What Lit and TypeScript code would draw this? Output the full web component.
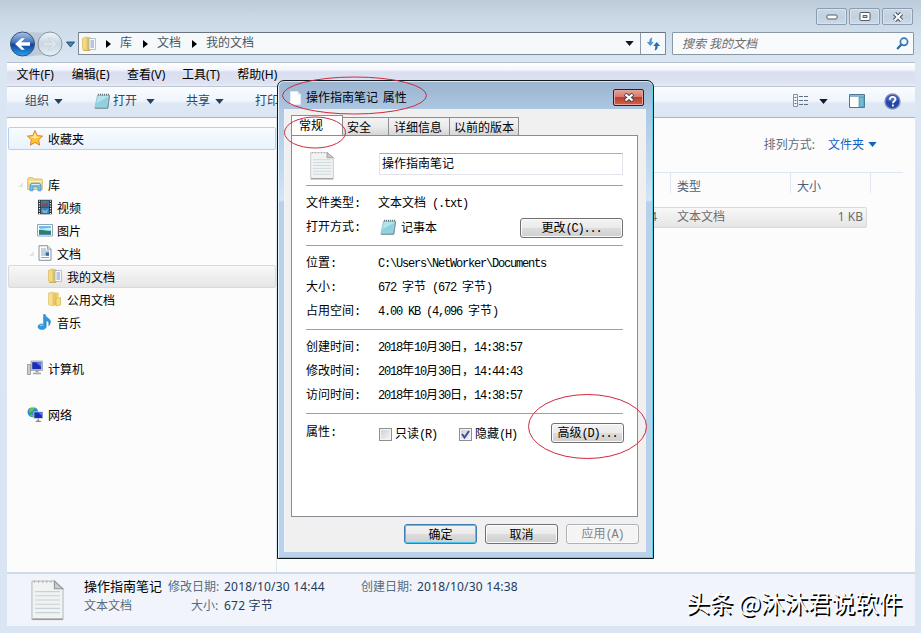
import { LitElement, html, css, svg } from "lit";
import { customElement } from "lit/decorators.js";

/* Splits text so that Latin runs can be set in half-width cells. */
const hw = (text: string) =>
  html`<span>${text
    .split(/([\x20-\x7e]+)/)
    .filter((p) => p)
    .map((p) => (/^[\x20-\x7e]/.test(p) ? html`<span class="hw">${p}</span>` : p))}</span>`;

const icons: Record<string, unknown> = {
  folder: svg`<path d="M1.500 2.500 6 .8v14L1.500 13z" fill="#f3d984" stroke="#d9b95a" stroke-width=".7"/><path d="M6 1.200h3.500v13.500H6z" fill="#e4c25a"/><path d="M8 2.500h6.500v11H8z" fill="#f6f9fd" stroke="#9cabc0" stroke-width=".7"/><path d="M9.500 5h3.500M9.500 7h3.500M9.500 9h3.500M9.500 11h3.500" stroke="#7195cc"/><path d="M2 14.500h7" stroke="#c9a63f" stroke-width=".8"/>`,
  publicFolder: svg`<path d="M1.500 2 6 1v14l-4.500-1.500z" fill="#f6df8f" stroke="#dfc269" stroke-width=".7"/><path d="M6 1.500h4v13H6z" fill="#e6c763"/><path d="m9 7.500 4.500-1v7.500l-4.500 1z" fill="#f5dc85" stroke="#d4b24d" stroke-width=".7"/><path d="M10 1.500h2v6h-2z" fill="#efd887"/>`,
  star: svg`<path d="m8 .5 2.200 5 5.400.6-4 3.600 1.100 5.500L8 12.400l-4.700 2.800 1.100-5.500-4-3.600 5.400-.6z" fill="#ffc33a" stroke="#dd7b22" stroke-width=".9"/><path d="m8 2.500 1.500 4 4 .6L8 8.500l-5-1.400 3.500-.6z" fill="#ffec9a"/>`,
  library: svg`<path d="M.7 13.500V3l1-1.300h4L7 3h7.500l.8 1v9.500z" fill="#f3dc8e" stroke="#cfae58" stroke-width=".8"/><path d="M1.500 5.500h13" stroke="#fff5cb"/><path d="M3 14.800V9l1.500-1.800h8L14 9v5.800h-3v-4H6v4z" fill="#6fbde8" stroke="#3d8ec4" stroke-width=".7"/><path d="M4.500 8.500h8" stroke="#d3f0ff"/>`,
  video: svg`<path d="M1 .8h14v14.500H1z" fill="#26343e"/><path d="M4 1.500h8v6.200H4z" fill="#4a7ca0"/><path d="M4 8.500h8v6.200H4z" fill="#3f82b5"/><path d="m5 3 3 2 3-2v4H5z" fill="#8a4b50"/><path d="m5 10 3 2 3-2-1 4H6z" fill="#78b8df"/><path d="M2.500 1.500v14M13.500 1.500v14" stroke="#e8eef2" stroke-width="1.300" stroke-dasharray="1.300 1.200"/>`,
  picture: svg`<path d="M.5 2.500h15v11.500H.5z" fill="#fff" stroke="#8fa4b5"/><path d="M2 4h12v8.500H2z" fill="#6bbbe8"/><path d="M2 6c4 2 8-1 12 0v3H2z" fill="#c8ecf6"/><path d="M2 8c4-1 6 1.500 12 .5v4H2z" fill="#2d7f76"/><path d="M2 11h12v1.500H2z" fill="#2a6fb4"/>`,
  doc: svg`<path d="M2 .7h8.500L14 4.200v11.100H2z" fill="#fbfdff" stroke="#8593a4"/><path d="M10.500.7v3.500H14" fill="#dce5ee" stroke="#8593a4" stroke-width=".8"/><path d="M4 4h5M4 6h8M4 8h4M4 10h4M4 12.500h8" stroke="#8798aa" stroke-width=".9"/><path d="M8.500 7.300H12v3.500H8.500z" fill="#2d69a5"/>`,
  music: svg`<path d="M8.200.5c.2 3.200 4.500 3.500 5.200 6.500.4 2-.6 3.500-1.700 4.800.6-2.500.2-4.500-2.500-5.400v6.200c0 1.700-1.700 2.900-4 2.900-2.500 0-4.200-1-4.200-2.800 0-2 2.400-3.200 5.600-2.700V.5z" fill="#2b9be0" stroke="#1872b5" stroke-width=".5"/><path d="M3 12c1-1 2.500-1 3.500-.8" stroke="#a7def9" fill="none"/>`,
  computer: svg`<path d="M.5 4.500h3v10h-3z" fill="#c8cdd1" stroke="#84898d" stroke-width=".7"/><path d="M4 1h11.500v9.500H4z" fill="#d0d4da" stroke="#81878d" stroke-width=".6"/><path d="M5.200 2.200h9v7h-9z" fill="#1c2fb0"/><path d="M9 2.200h5.200V7z" fill="#5a7ff0"/><path d="M8.500 10.500h3v2h-3z" fill="#999fa5"/><path d="M6 13.500h8" stroke="#a2a7ac" stroke-width="1.600"/>`,
  network: svg`<circle cx="5.800" cy="6" r="5.300" fill="#2a8bd0"/><path d="M1.500 4C3 1 7 0 9 2 6 2 7 5 4.500 5.500 4 8 2 6 1.500 4zM3 8l3 1v2.300C4 11 3 9.500 3 8z" fill="#63c153"/><path d="M3 1.800C5 .5 7.500.8 8.800 2" stroke="#dff3d9" fill="none"/><path d="M6.500 5.500H16v7.300H6.500z" fill="#c7cfda"/><path d="M7.300 6.300h8v5.700h-8z" fill="#1630b6"/><path d="M11 6.300h4.300V10z" fill="#557af0"/><path d="M11.200 12.500v2.500M8.800 15.300h5" stroke="#808a95" stroke-width="1.300"/>`,
  notepad: svg`<path d="M3.500 2h12l-1.700 13H.8z" fill="#93cfdb" stroke="#8fbccb" stroke-width=".7"/><path d="M4 3h10.500L13 12.500 1.500 14z" fill="#b4e3ea"/><path d="M2.500 10 14 4l-1 8.500L1.500 14z" fill="#8fd0de"/><path d="M13.800 15.200 15.600 2.500M1 15.300h12.800" stroke="#6d838c" stroke-width=".9"/><path d="M4 1.700h11.500" stroke="#65757c" stroke-width="1.800" stroke-dasharray="1 1"/>`,
};

const icon = (name: string) =>
  html`<svg class="ic" width="16" height="16" viewBox="0 0 16 16">${icons[name]}</svg>`;

const caret = (cls = "") =>
  html`<svg class="caret ${cls}" width="9" height="5" viewBox="0 0 9 5"><path d="M.3 0h8.400L4.500 5z" fill="currentColor"/></svg>`;

const page = (w: number, h: number) => html`
  <svg width=${w} height=${h} viewBox="0 0 24 30" preserveAspectRatio="none">
    <path d="M.7 1.500H17L23.300 7v22H.7z" fill="#f1f2f2" stroke="#b4b8ba" stroke-width=".7" />
    <path d="M17 1.500V7h6.300z" fill="#c9cccd" stroke="#929698" stroke-width=".8" />
    <path d="M2 1.800h14" stroke="#b4b8ba" stroke-width="1.600" stroke-dasharray="1 2" />
    <path d="M3 9h18M3 12h18M3 15h18M3 18h18M3 21h18M3 24h18" stroke="#c5d2d8" stroke-width=".8" />
    <path d="M1 28.700h22" stroke="#92989b" stroke-width="1.100" />
  </svg>`;

@customElement("nav-tree")
class NavTree extends LitElement {
  static styles = css`
    :host { display: block; width: 270px; box-sizing: border-box; padding: 9px 0 0 1px; border-right: 1px solid #dbe6f1; background: #fcfcfc; }
    .row { height: 23px; box-sizing: border-box; display: flex; align-items: center; gap: 5px; border: 1px solid transparent; border-radius: 2px; font: 12px/16px "Noto Sans CJK SC", sans-serif; color: #000; }
    .ic { flex: none; display: block; margin-top: -1px; }
    .l0 { padding-left: 18px; }
    .l1 { padding-left: 28px; }
    .l2 { padding-left: 38px; }
    .l0.open { padding-left: 9px; }
    .l1.open { padding-left: 20px; }
    .l1, .l2 { gap: 4px; }
    .tw { width: 5px; flex: none; margin-right: -1px; }
    .hot { border-color: #b5d1ec; background: linear-gradient(#f9fcff, #e9f2fc); }
    .sel { border-color: #d9d9d9; background: linear-gradient(#f8f8f8, #e6e6e6); }
  `;
  rows: [string, string, string][] = [
    ["star", "收藏夹", "l0 hot"], ["", "", ""],
    ["library", "库", "l0 open"], ["video", "视频", "l1"], ["picture", "图片", "l1"], ["doc", "文档", "l1 open"],
    ["folder", "我的文档", "l2 sel"], ["publicFolder", "公用文档", "l2"], ["music", "音乐", "l1"], ["", "", ""],
    ["computer", "计算机", "l0"], ["", "", ""], ["network", "网络", "l0"],
  ];
  render() {
    return this.rows.map(
      ([i, t, c]) => html`<div class="row ${c}">
        ${c.includes("open") ? html`<svg class="tw" width="5" height="5" viewBox="0 0 5 5"><path d="M5 0v5H0z" fill="#e1e7e3" /></svg>` : ""}
        ${i ? icon(i) : ""}<span>${t}</span>
      </div>`
    );
  }
}

@customElement("properties-dialog")
class PropertiesDialog extends LitElement {
  static styles = css`
    :host { display: flex; flex-direction: column; width: 377px; height: 479px; box-sizing: border-box; border: 1px solid #10161c; border-radius: 7px 7px 0 0; padding: 0 6px 6px; box-shadow: inset 1px 0 #e8f4fc, inset 0 1px #d7e7f5, inset -1px -1px #51d2ea; background: linear-gradient(#9cb6d2 0, #a2bcd8 12px, #aec8e2 29px, #c5daee 90px, #d6e5f3 119px, #b9d1e8 121px, #b9d1ea 100%); font: 12px/16px "Noto Sans CJK SC", sans-serif; color: #000; }
    .hw { font-family: "Liberation Mono", monospace; letter-spacing: -1.2px; white-space: pre; }
    .title { height: 28px; flex: none; display: flex; align-items: center; padding: 5px 3px 0 6px; box-sizing: border-box; gap: 5px; }
    .title span { flex: 1; white-space: pre; word-spacing: 2px; margin-top: -1px; }
    .title .ic, svg { display: block; flex: none; }
    .close { width: 31px; height: 17px; box-sizing: border-box; border: 1px solid #3e1a1d; border-radius: 2px; background: linear-gradient(#e6a296 0, #d5786b 48%, #bd3e2c 50%, #cf6150 100%); box-shadow: inset 0 0 0 1px #e6a59b; display: flex; align-items: center; justify-content: center; margin-top: -1px; }
    .client { flex: 1; background: #f0f0f0; border-left: 1px solid #f0f7fc; padding: 6px 8px 7px 6px; display: flex; flex-direction: column; min-height: 0; margin: 0 1px 0 0; }
    .tabs { display: flex; height: 20px; flex: none; align-items: flex-end; }
    .tab { height: 18px; box-sizing: border-box; border: 1px solid #8c8e94; border-left-width: 0; border-bottom: 0; background: linear-gradient(#f3f3f3, #ebebeb 50%, #d5d5d5); line-height: 18px; padding-left: 5px; white-space: nowrap; }
    .tab.on { height: 21px; margin-bottom: -1px; background: #fff; border-left-width: 1px; width: 52px; padding-left: 7px; line-height: 18px; }
    .w2 { width: 46px; padding-left: 4px; }
    .w3 { width: 61px; }
    .w4 { width: 69px; padding-left: 4px; }
    .page { flex: none; height: 382px; box-sizing: border-box; border: 1px solid #898c95; background: #fff; padding: 14px 14px 0; }
    .head { display: flex; height: 35px; align-items: flex-start; padding-left: 4px; gap: 45px; }
    .head svg { margin-top: 1px; }
    .name { margin-top: 3px; width: 247px; height: 22px; box-sizing: border-box; border: 1px solid #e2e3ea; border-top-color: #abadb3; padding-left: 2px; line-height: 18px; }
    .rule { height: 1px; background: #a0a0a0; width: 317px; }
    .f { display: flex; height: 24px; align-items: center; }
    .f > b { font-weight: normal; width: 72px; flex: none; }
    .f .v { white-space: pre; }
    .group { padding: 5px 0 6px; height: 83px; box-sizing: border-box; }
    .group .app { display: flex; flex: 1; gap: 5px; margin-left: 2px; align-items: center; }
    .group.first { height: 59px; padding: 5px 0; }
    .btn { height: 20px; width: 73px; box-sizing: border-box; border: 1px solid #707070; border-radius: 3px; background: linear-gradient(#f3f3f3, #ebebeb 48%, #dddddd 50%, #cfcfcf); box-shadow: inset 0 0 0 1px #fbfbfb; display: flex; align-items: center; justify-content: center; white-space: pre; flex: none; }
    .wide { width: 103px; margin-top: 2px; }
    .ok { border-color: #3c7fb1; box-shadow: inset 0 0 0 1px #48c5ee; }
    .off { border-color: #adb2b5; background: #f4f4f4; color: #838383; }
    .attrs { display: flex; padding-top: 9px; align-items: flex-start; height: 40px; width: 318px; }
    .attrs > b { font-weight: normal; width: 73px; }
    .chk { display: flex; align-items: center; gap: 3px; width: 80px; height: 22px; }
    .attrs .chk:nth-of-type(2) { width: 92px; }
    .box { width: 13px; height: 13px; box-sizing: border-box; border: 1px solid #8e8f8f; background: linear-gradient(135deg, #cbcfd5, #f6f6f6); box-shadow: inset 0 0 0 1px #f4f4f4; }
    .foot { display: flex; gap: 8px; justify-content: flex-end; margin: 7px -1px 0 0; }
  `;
  field(k: string, v: string) {
    return html`<div class="f"><b>${hw(k)}</b><span class="v">${hw(v)}</span></div>`;
  }
  render() {
    return html`
      <div class="title">
        <svg width="11" height="14" viewBox="0 0 11 14"><path d="M.5.5h7L10.500 3.500v10H.5z" fill="#fff" stroke="#e3ebf2" /><path d="M7.500.5v3h3" fill="#d5dfe7" /></svg>
        <span>操作指南笔记 属性</span>
        <div class="close"><svg width="12" height="9" viewBox="0 0 12 9"><path d="m2 1 8 7M10 1 2 8" stroke="#4b4a50" stroke-width="4" /><path d="m2.500 1.500 7 6M9.500 1.500l-7 6" stroke="#fff" stroke-width="2.200" /></svg></div>
      </div>
      <div class="client">
        <div class="tabs">
          <div class="tab on">常规</div><div class="tab w2">安全</div><div class="tab w3">详细信息</div><div class="tab w4">以前的版本</div>
        </div>
        <div class="page">
          <div class="head">${page(24, 29)}<div class="name">操作指南笔记</div></div>
          <div class="rule"></div>
          <div class="group first">
            ${this.field("文件类型:", "文本文档 (.txt)")}
            <div class="f"><b>${hw("打开方式:")}</b><div class="app">${icon("notepad")}<span>记事本</span></div><div class="btn wide">${hw("更改(C)...")}</div></div>
          </div>
          <div class="rule"></div>
          <div class="group">
            ${this.field("位置:", "C:\\Users\\NetWorker\\Documents")} ${this.field("大小:", "672 字节 (672 字节)")} ${this.field("占用空间:", "4.00 KB (4,096 字节)")}
          </div>
          <div class="rule"></div>
          <div class="group">
            ${this.field("创建时间:", "2018年10月30日，14:38:57")} ${this.field("修改时间:", "2018年10月30日，14:44:43")} ${this.field("访问时间:", "2018年10月30日，14:38:57")}
          </div>
          <div class="rule"></div>
          <div class="attrs">
            <b>${hw("属性:")}</b>
            <div class="chk"><span class="box"></span>${hw("只读(R)")}</div>
            <div class="chk"><span class="box"><svg width="11" height="11" viewBox="0 0 11 11"><path d="m2 5 2.500 3.500L9 2" fill="none" stroke="#3d4f9a" stroke-width="2" /></svg></span>${hw("隐藏(H)")}</div>
            <div class="btn">${hw("高级(D)...")}</div>
          </div>
        </div>
        <div class="foot"><div class="btn ok">确定</div><div class="btn">取消</div><div class="btn off">${hw("应用(A)")}</div></div>
      </div>
    `;
  }
}

@customElement("app-root")
class AppRoot extends LitElement {
  static styles = css`
    :host { display: flex; flex-direction: column; position: relative; width: 921px; height: 633px; overflow: hidden; box-sizing: border-box; padding: 0 6px 7px 7px; background: linear-gradient(#bccbda 0, #c9d6e3 16px, #d3e0ed 40px, #dae6f2 62px, #d9e5f2 100%); font: 12px/16px "Noto Sans", "Noto Sans CJK SC", sans-serif; color: #1e395b; }
    svg { display: block; flex: none; }
    .caption { height: 32px; flex: none; display: flex; justify-content: flex-end; gap: 2px; padding: 8px 2px 0 0; box-sizing: border-box; }
    .cap { width: 31px; height: 17px; box-sizing: border-box; border: 1px solid #8c9db1; border-radius: 2px; display: flex; align-items: center; justify-content: center; background: linear-gradient(#cbd8e6, #c2d1e0 50%, #ccdae8); box-shadow: inset 0 0 0 1px #d8e3ee; }
    .nav { height: 30px; flex: none; display: flex; align-items: flex-start; padding: 0 1px 0 2px; }
    .arrows { margin-top: -2px; width: 69px; height: 28px; flex: none; }
    .crumbs { width: 588px; height: 23px; box-sizing: border-box; border: 1px solid #7d8a98; border-top-color: #69747f; background: #f6f9fc; border-radius: 1px; display: flex; align-items: center; padding-left: 2px; color: #4a545e; flex: none; }
    .crumbs > span { margin-top: -1px; }
    .crumbs .end { margin-left: auto; display: flex; align-items: center; height: 100%; color: #15152e; gap: 6px; }
    .sep { margin: 0 9px 0 11px; }
    .sep.a { margin-left: 9px; }
    .refresh { width: 24px; border-left: 1px solid #8e9aa7; height: 21px; display: flex; align-items: center; justify-content: center; }
    .search { margin-left: 6px; flex: 1; height: 23px; box-sizing: border-box; border: 1px solid #8a97a5; border-radius: 1px; background: #f8fafc; display: flex; align-items: center; justify-content: space-between; padding: 0 4px 0 9px; font-style: italic; color: #6d6d6d; }
    .frame { flex: 1; display: flex; flex-direction: column; min-height: 0; width: 908px; }
    .menu { height: 24px; flex: none; box-sizing: border-box; border-top: 1px solid #b4c0cf; display: grid; grid-template-columns: repeat(5, 55.2px); padding-left: 9.5px; align-items: center; color: #000; background: linear-gradient(#fff 0, #f3f5fb 7px, #d9dff0 9px, #dee2f1 20px, #e9ecf7 100%); line-height: 23px; white-space: nowrap; }
    .tools { height: 32px; flex: none; box-sizing: border-box; border-top: 1px solid #bcc6d5; border-bottom: 1px solid #a7b6c8; display: flex; align-items: center; padding: 0 14px 2px 18px; color: #2b4868; background: linear-gradient(#fafcff 0, #f0f5fc 14px, #dfe8f5 16px, #dbe6f4 100%); }
    .tools .caret { margin-left: 5px; color: #24405e; }
    .tools .far { margin-left: 9px; }
    .tools .gap { margin-left: 31px; }
    .tools .open { margin-left: 31px; margin-right: 3px; display: block; }
    .tools .sp { flex: 1; }
    .tools .views { margin-left: 10px; color: #111a2c; }
    .tools .pane { margin-left: 21px; }
    .tools .help { margin-left: 19px; }
    .body { flex: 1; display: flex; min-height: 0; background: #fcfcfc; }
    .list { flex: 1; display: flex; flex-direction: column; background: #fcfcfc; background-image: linear-gradient(170deg, #f7fafd, #fcfcfc 60px); }
    .sort { display: flex; justify-content: flex-end; align-items: center; height: 54px; box-sizing: border-box; padding-right: 38px; color: #5d6e82; }
    .sort a { color: #0a64c8; margin: 0 4px 0 13px; }
    .sort .caret { color: #1065be; margin-top: -2px; }
    .cols { display: grid; grid-template-columns: 394px 120px 80px 1fr; height: 22px; border-top: 1px solid #dce6f2; margin-right: 12px; line-height: 27px; color: #4c607a; }
    .cols div { border-right: 1px solid #e1e8f0; padding-left: 6px; }
    .cols div:last-child { border: 0; }
    .cols div:nth-child(-n + 3) { height: 20px; }
    .file { display: grid; grid-template-columns: 392px 120px 1fr; height: 21px; box-sizing: border-box; width: 590px; margin-top: 12px; border: 1px solid #d9d9d9; border-radius: 2px; background: linear-gradient(#f8f8f8, #e5e5e5); line-height: 18px; color: #6d6d6d; }
    .file .d { text-align: right; padding-right: 13px; }
    .file .s { text-align: right; padding-right: 3px; }
    .file .t { padding-left: 7px; }
    .details { height: 54px; flex: none; box-sizing: border-box; border-top: 2px solid #cfdbe9; background: #f1f5fb; display: flex; padding: 5px 0 0 24px; color: #5a6b80; }
    .cells { display: grid; grid-template-columns: 84px 56px 137px 56px 120px; grid-template-rows: 19px 18px; margin: -2px 0 0 20px; line-height: 19px; white-space: nowrap; }
    .cells b { font-weight: normal; color: #1e395b; letter-spacing: 0.2px; }
    .cells .n { color: #000; font-size: 13px; }
    .cells .r { padding-left: 23px; }
    .dialog { position: absolute; left: 277px; top: 80px; }
    .marks { position: absolute; left: 0; top: 0; pointer-events: none; }
    .wm { position: absolute; left: 686px; top: 585px; font: 24px/34px "Noto Sans CJK SC", sans-serif; color: #fff; text-shadow: 1.5px 1.5px 0 #000; white-space: nowrap; letter-spacing: -0.4px; }
  `;
  render() {
    const sep = (c = "") => html`<svg class="sep ${c}" width="5" height="8" viewBox="0 0 5 8"><path d="M0 0v8l5-4z" fill="#000" /></svg>`;
    return html`
      <div class="caption">
        <div class="cap"><svg width="12" height="6" viewBox="0 0 12 6"><rect x="1" y="1" width="10" height="4" rx="1" fill="#fff" stroke="#555c66" /></svg></div>
        <div class="cap"><svg width="12" height="9" viewBox="0 0 12 9"><rect x="1" y=".5" width="10" height="8" rx="1" fill="#fff" stroke="#555c66" /><path d="M4 3.500h4v2H4z" fill="#c8d5e3" stroke="#555c66" /></svg></div>
        <div class="cap"><svg width="12" height="10" viewBox="0 0 12 10"><path d="m2.500 1.500 7 7M9.500 1.500l-7 7" stroke="#555c66" stroke-width="4.400" /><path d="m2.500 1.500 7 7M9.500 1.500l-7 7" stroke="#fff" stroke-width="2" /></svg></div>
      </div>
      <div class="nav">
        <svg class="arrows" width="69" height="28" viewBox="0 0 69 28">
          <defs>
            <linearGradient id="bk" x2="0" y2="1"><stop stop-color="#a9c5e9" /><stop offset=".46" stop-color="#3d70b8" /><stop offset=".5" stop-color="#123f98" /><stop offset="1" stop-color="#2aa4ed" /></linearGradient>
            <linearGradient id="fw" x2="0" y2="1"><stop stop-color="#eef3f8" /><stop offset=".5" stop-color="#cbd7e3" /><stop offset="1" stop-color="#e9f0f6" /></linearGradient>
          </defs>
          <path d="M15 1.500c10 0 14 3 26 0v25c-12-3-16 0-26 0z" fill="#bdcad8" />
          <circle cx="13.500" cy="14" r="12" fill="url(#bk)" stroke="#3c5276" />
          <circle cx="41" cy="14" r="12" fill="url(#fw)" stroke="#8895a5" />
          <path d="M6 14l6.500-5.800h3.300L12 12.300h9v3.400h-9l3.800 4.100h-3.300z" fill="#fff" />
          <path d="M48.500 14 42 8.200h-3l4 4.100h-9v3.400h9l-4 4.100h3z" fill="#dce5ed" stroke="#c0ccd8" stroke-width=".6" />
          <path d="M57.500 12h8l-4 5z" fill="#3a86b8" stroke="#24496e" stroke-width=".9" />
        </svg>
        <div class="crumbs">
          ${icon("folder")}${sep("a")}<span>库</span>${sep()}<span>文档</span>${sep()}<span>我的文档</span>
          <div class="end">${caret()}
            <div class="refresh"><svg width="15" height="14" viewBox="0 0 15 14"><path d="M6.500.5C4 1 3.300 2.500 3.300 5H.8l3.500 4 3.500-4H5.700c0-2 .2-3 .8-4.500z" fill="#4a95d3" /><path d="M8.500 13.500c2.500-.5 3.200-2 3.200-4.500h2.500l-3.500-4-3.500 4h2.100c0 2-.2 3-.8 4.500z" fill="#2c6cae" /></svg></div>
          </div>
        </div>
        <div class="search"><span>搜索 我的文档</span><svg width="13" height="13" viewBox="0 0 13 13"><circle cx="8" cy="4.800" r="3.600" fill="#eef7fd" stroke="#3a77b5" stroke-width="1.700" /><path d="M5.300 7.500 1.200 12" stroke="#2f69a5" stroke-width="2.200" /></svg></div>
      </div>
      <div class="frame">
        <div class="menu"><span>文件(F)</span><span>编辑(E)</span><span>查看(V)</span><span>工具(T)</span><span>帮助(H)</span></div>
        <div class="tools">
          <span>组织</span>${caret()}<span class="open">${icon("notepad")}</span><span>打开</span>${caret("far")}<span class="gap">共享</span>${caret()}<span class="gap">打印</span>
          <span class="sp"></span>
          <svg width="16" height="14" viewBox="0 0 16 14"><path d="M.5.5h4v12h-4z" fill="#f2f6fb" stroke="#8291a4" /><path d="M1.500 3.500h2M1.500 6.500h2M1.500 9.500h2" stroke="#5b7693" /><path d="M6 2.500h4M11 2.500h4M6 6.500h4M11 6.500h4M6 10.500h4M11 10.500h4" stroke="#5e6f82" /></svg>
          ${caret("views")}
          <svg class="pane" width="16" height="14" viewBox="0 0 16 14"><path d="M.5.5h15v13H.5z" fill="#fff" stroke="#4b7896" /><path d="M1 1h14v2H1z" fill="#8db5cd" /><path d="M10 3h5v10h-5z" fill="#6fbbd6" stroke="#4b8fae" stroke-width=".7" /></svg>
          <svg class="help" width="17" height="17" viewBox="0 0 17 17"><circle cx="8.500" cy="8.500" r="7.500" fill="#2446ac" stroke="#8291b0" stroke-width="1.400" /><path d="M3 7c1-6 10-6 11 0-3 2-8 2-11 0z" fill="#6887d6" opacity=".6" /><path d="M5.900 6.800c0-3.800 5.500-3.600 5.500-.5 0 2-2.500 2-2.500 4M8.900 11.500v2" stroke="#fff" stroke-width="1.800" fill="none" /></svg>
        </div>
        <div class="body">
          <nav-tree></nav-tree>
          <div class="list">
            <div class="sort"><span>排列方式:</span><a>文件夹</a>${caret()}</div>
            <div class="cols"><div></div><div>类型</div><div>大小</div><div></div></div>
            <div class="file"><span class="d">4</span><span class="t">文本文档</span><span class="s">1 KB</span></div>
          </div>
        </div>
        <div class="details">
          ${page(33, 42)}
          <div class="cells">
            <span class="n">操作指南笔记</span><span>修改日期:</span><b>2018/10/30 14:44</b><span>创建日期:</span><b>2018/10/30 14:38</b>
            <span>文本文档</span><span class="r">大小:</span><b>672 字节</b>
          </div>
        </div>
      </div>
      <properties-dialog class="dialog"></properties-dialog>
      <svg class="marks" width="921" height="633" viewBox="0 0 921 633" fill="none" stroke="#d0283c">
        <ellipse cx="354.500" cy="95.500" rx="72" ry="18.500" /><ellipse cx="315" cy="132.500" rx="30.500" ry="15.500" /><ellipse cx="587.500" cy="426.500" rx="59" ry="32" />
      </svg>
      <div class="wm">头条 @沐沐君说软件</div>
    `;
  }
}
